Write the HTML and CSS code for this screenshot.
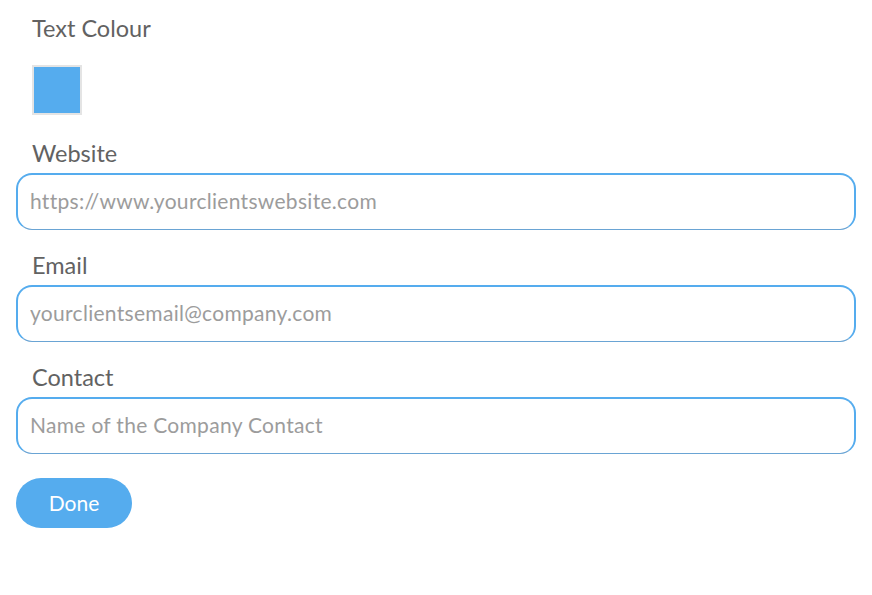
FILE: index.html
```html
<!DOCTYPE html>
<html>
<head>
<meta charset="utf-8">
<link rel="stylesheet" href="styles.css">
</head>
<body>
<div class="form">
  <div class="label label-first">Text Colour</div>
  <div class="swatch"><div class="swatch-fill"></div></div>
  <div class="field">
    <div class="label">Website</div>
    <input class="input" type="text" placeholder="https://www.yourclientswebsite.com">
  </div>
  <div class="field">
    <div class="label">Email</div>
    <input class="input" type="text" placeholder="yourclientsemail@company.com">
  </div>
  <div class="field">
    <div class="label">Contact</div>
    <input class="input" type="text" placeholder="Name of the Company Contact">
  </div>
  <button class="done">Done</button>
</div>
</body>
</html>
```
FILE: styles.css
```css
html, body {
  margin: 0;
  background: #ffffff;
}
body {
  padding: 14px 16px;
  font-family: Lato, "Noto Sans", sans-serif;
}
.form {
  display: flex;
  flex-direction: column;
  align-items: flex-start;
}
.label {
  font-size: 23.5px;
  line-height: 26px;
  padding-top: 1px;
  color: #626262;
  padding-left: 16px;
}
.swatch {
  margin: 24px 0 0 16px;
  width: 50px;
  height: 50px;
  box-sizing: border-box;
  border: 2px solid #e4e4e4;
}
.swatch-fill {
  width: 100%;
  height: 100%;
  background: #55acee;
}
.field {
  display: flex;
  flex-direction: column;
  gap: 7px;
  width: 100%;
  margin-top: 24px;
}
.field + .field {
  margin-top: 21px;
}
.input {
  box-sizing: border-box;
  width: 100%;
  height: 57px;
  margin: 0;
  border: 2px solid #55acee;
  border-bottom: 1px solid #6aa4d4;
  border-radius: 16px;
  padding: 0 12px 3px;
  font-family: Lato, "Noto Sans", sans-serif;
  font-size: 21px;
  letter-spacing: 0.3px;
  color: #555;
  background: #fff;
  outline: none;
}
.input::placeholder {
  color: #9c9c9c;
}
.done {
  margin-top: 24px;
  width: 116px;
  height: 50px;
  border: none;
  border-radius: 25px;
  background: #55acee;
  color: #ffffff;
  font-family: Lato, "Noto Sans", sans-serif;
  font-size: 21px;
  padding: 0 0 2px;
  cursor: pointer;
}
```
